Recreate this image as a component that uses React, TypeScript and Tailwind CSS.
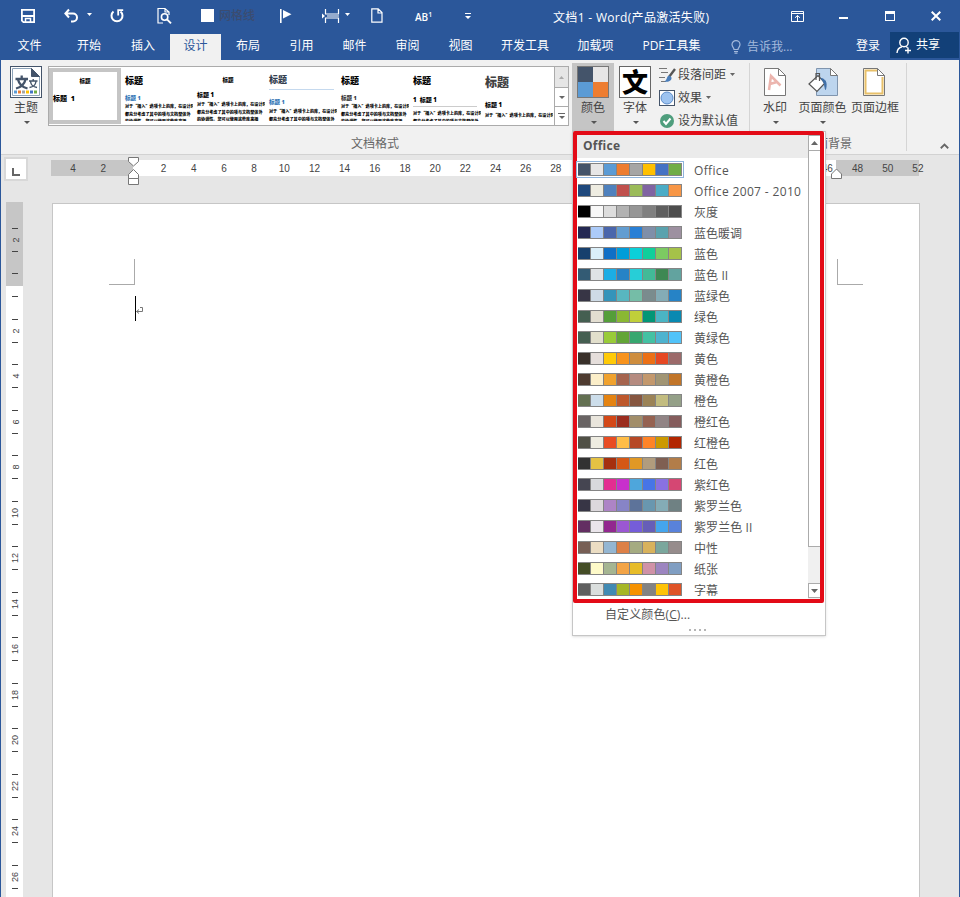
import {ReactNode} from "react";
import clsx from "clsx";

interface ColorScheme {
  name: string;
  colors: string[];
}

const colorSchemes: ColorScheme[] = [
  {name: "Office", colors: ["#44546a", "#e7e6e6", "#5b9bd5", "#ed7d31", "#a5a5a5", "#ffc000", "#4472c4", "#70ad47"]},
  {name: "Office 2007 - 2010", colors: ["#1f497d", "#eeece1", "#4f81bd", "#c0504d", "#9bbb59", "#8064a2", "#4bacc6", "#f79646"]},
  {name: "灰度", colors: ["#000000", "#f8f8f8", "#dddddd", "#b2b2b2", "#969696", "#808080", "#5f5f5f", "#4d4d4d"]},
  {name: "蓝色暖调", colors: ["#242852", "#accbf9", "#4a66ac", "#629dd1", "#297fd5", "#7f8fa9", "#5aa2ae", "#9d90a0"]},
  {name: "蓝色", colors: ["#17406d", "#dbeff9", "#0f6fc6", "#009dd9", "#0bd0d9", "#10cf9b", "#7cca62", "#a5c249"]},
  {name: "蓝色 II", colors: ["#335b74", "#dfe3e5", "#1cade4", "#2683c6", "#27ced7", "#42ba97", "#3e8853", "#62a39f"]},
  {name: "蓝绿色", colors: ["#373545", "#cedbe6", "#3494ba", "#58b6c0", "#75bda7", "#7a8c8e", "#84acb6", "#2683c6"]},
  {name: "绿色", colors: ["#455f51", "#e3ded1", "#549e39", "#8ab833", "#c0cf3a", "#029676", "#4ab5c4", "#0989b1"]},
  {name: "黄绿色", colors: ["#455f51", "#e2dfcc", "#99cb38", "#63a537", "#37a76f", "#44c1a3", "#4eb3cf", "#51c3f9"]},
  {name: "黄色", colors: ["#39302a", "#e5dedb", "#ffca08", "#f8931d", "#ce8d3e", "#ec7016", "#e64823", "#9c6a6a"]},
  {name: "黄橙色", colors: ["#4e3b30", "#fbeec9", "#f0a22e", "#a5644e", "#b58b80", "#c3986d", "#a19574", "#c17529"]},
  {name: "橙色", colors: ["#637052", "#ccddea", "#e48312", "#bd582c", "#865640", "#9b8357", "#c2bc80", "#94a088"]},
  {name: "橙红色", colors: ["#696464", "#e9e5dc", "#d34817", "#9b2d1f", "#a28e6a", "#956251", "#918485", "#855d5d"]},
  {name: "红橙色", colors: ["#505046", "#eeece1", "#e84c22", "#ffbd47", "#b64926", "#ff8427", "#cc9900", "#b22600"]},
  {name: "红色", colors: ["#323232", "#e5c243", "#a5300f", "#d55816", "#e19825", "#b19c7d", "#7f5f52", "#b27d49"]},
  {name: "紫红色", colors: ["#454551", "#d8d9dc", "#e32d91", "#c830cc", "#4ea6dc", "#4775e7", "#8971e1", "#d54773"]},
  {name: "紫罗兰色", colors: ["#373545", "#dcd8dc", "#ad84c6", "#8784c7", "#5d739a", "#6997af", "#84acb6", "#6f8183"]},
  {name: "紫罗兰色 II", colors: ["#632e62", "#eae5eb", "#92278f", "#9b57d3", "#755dd9", "#665eb8", "#45a5ed", "#5982db"]},
  {name: "中性", colors: ["#775f55", "#ebddc3", "#94b6d2", "#dd8047", "#a5ab81", "#d8b25c", "#7ba79d", "#968c8c"]},
  {name: "纸张", colors: ["#444d26", "#fefac9", "#a5b592", "#f3a447", "#e7bc29", "#d092a7", "#9c85c0", "#809ec2"]},
  {name: "字幕", colors: ["#5f5f5f", "#dadedd", "#418ab3", "#a6b727", "#f69200", "#838383", "#fec306", "#df5327"]},
];

const Caret = ({className}: {className?: string}) => (
  <svg viewBox="0 0 5 3" className={clsx("shrink-0", className ?? "w-[6px] h-[3px]")} preserveAspectRatio="none">
    <path d="M0 0h5L2.5 3z" fill="currentColor" />
  </svg>
);

const TitleBar = () => (
  <div className="flex items-center h-[33px] text-white">
    <svg viewBox="0 0 16 16" className="ml-[19px] -mt-0.5 w-4 h-4 shrink-0" fill="none" stroke="currentColor" strokeWidth="1.8">
      <path d="M1.9 1.9h12.2v12.2H3.4L1.9 12.6z" />
      <path d="M2 8h12" strokeWidth="2" />
      <path d="M5.5 14v-3.5h5V14" strokeWidth="1.5" />
    </svg>
    <svg viewBox="0 0 16 16" className="ml-[27px] -mt-0.5 w-4 h-4 shrink-0" fill="none" stroke="currentColor" strokeWidth="2">
      <path d="M6 1.5 2.4 5.5 6 9.5M2.5 5.5H10a3.9 3.9 0 0 1 0 8H8" />
    </svg>
    <Caret className="ml-2 -mt-1 w-[5px] h-[3px]" />
    <svg viewBox="0 0 16 16" className="ml-[17px] -mt-0.5 w-4 h-4 shrink-0" fill="none" stroke="currentColor" strokeWidth="2">
      <path d="M4.500 3.600A5.500 5.500 0 1 0 11.500 3.600" />
      <path d="M9.200 7.500V2.200h5" strokeWidth="1.8" />
    </svg>
    <svg viewBox="0 0 16 18" className="ml-[31px] -mt-0.5 w-4 h-[18px] shrink-0" fill="none" stroke="currentColor" strokeWidth="1.2">
      <path d="M7 16H2V1.5h7L13 5v3M9 1.5V5h4" />
      <circle cx="8.6" cy="10" r="3.2" strokeWidth="1.6" />
      <path d="m11 12.4 4 4" strokeWidth="2" />
    </svg>
    <div className="ml-[29px] -mt-0.5 w-[13px] h-[13px] bg-white shrink-0" />
    <span className="ml-[5px] -mt-0.5 w-9 text-xs font-medium text-[#3b4c70] shrink-0">网格线</span>
    <svg viewBox="0 0 14 16" className="ml-[24px] -mt-0.5 w-[14px] h-4 shrink-0">
      <path d="M1 1h1.6v14H1zM4 2l8.5 4.3L4 10.5z" fill="currentColor" />
    </svg>
    <svg viewBox="0 0 18 16" className="ml-[29px] -mt-0.5 w-[18px] h-4 shrink-0" fill="none" stroke="currentColor" strokeWidth="1.2">
      <path d="M3.5 1v5h13V1M3.5 15v-5h13v5M5 8h12" />
      <path d="M0 5.5 3 8l-3 2.5z" fill="currentColor" stroke="none" />
    </svg>
    <Caret className="ml-[5px] -mt-1 w-[5px] h-[3px]" />
    <svg viewBox="0 0 12 15" className="ml-[21px] -mt-0.5 w-3 h-[15px] shrink-0" fill="none" stroke="currentColor" strokeWidth="1.2">
      <path d="M.8.8h6.4L11 4.6v9.6H.8zM7 1v4h4" />
    </svg>
    <span className="ml-[32px] w-[16px] text-[10px] leading-3 whitespace-nowrap font-semibold shrink-0">
      AB<sup className="text-[7px] top-[-4px]">1</sup>
    </span>
    <svg viewBox="0 0 6 6" className="ml-[34px] -mt-0.5 w-[6px] h-[6px] shrink-0">
      <path d="M0 0h6v1H0zM0 3h6L3 6z" fill="currentColor" />
    </svg>
    <span className="ml-[82px] w-[157px] text-xs tracking-[0.32px] whitespace-nowrap shrink-0 pt-0.5">
      文档1 - Word(产品激活失败)
    </span>
    <svg viewBox="0 0 13 11" className="ml-[81px] -mt-px w-[13px] h-[11px] shrink-0" fill="none" stroke="currentColor">
      <path d="M.5.5h12v10H.5zM.5 2.5h12M6.5 10V4.5M4 6.8l2.5-2.3L9 6.8" />
    </svg>
    <div className="ml-[35px] mt-[3px] w-[9px] h-[2px] bg-white shrink-0" />
    <div className="ml-[37px] -mt-px w-[10px] h-[10px] border border-t-[3px] border-white shrink-0" />
    <svg viewBox="0 0 10 10" className="ml-[36px] -mt-px w-[10px] h-[10px] shrink-0" stroke="currentColor" strokeWidth="2">
      <path d="m.7.7 8.6 8.6M9.3.7.7 9.3" />
    </svg>
  </div>
);

const TabBar = () => (
  <div className="flex h-[27px] leading-[26px] text-xs text-white text-center whitespace-nowrap">
    <div className="w-[61px] pr-1">文件</div>
    <div className="w-[54px]">开始</div>
    <div className="w-[54px]">插入</div>
    <div className="w-[51px] mt-px bg-[#f1f1f1] text-[#2b579a] leading-6">设计</div>
    <div className="w-[54px]">布局</div>
    <div className="w-[53px]">引用</div>
    <div className="w-[53px]">邮件</div>
    <div className="w-[53px]">审阅</div>
    <div className="w-[53px]">视图</div>
    <div className="w-[76px]">开发工具</div>
    <div className="w-[65px]">加载项</div>
    <div className="w-[87px]">PDF工具集</div>
    <div className="flex items-center ml-[16px] w-[125px] text-[#a3b9dc] gap-[6px]">
      <svg viewBox="0 0 10 14" className="w-[10px] h-[14px]" fill="none" stroke="currentColor" strokeWidth="1.2">
        <path d="M3 9.5C3 7.5 1 7 1 4.6a4 4 0 0 1 8 0C9 7 7 7.5 7 9.5zM3 11.5h4M3.5 13.2h3" />
      </svg>
      <span>告诉我...</span>
    </div>
    <div className="w-6">登录</div>
    <div className="flex items-center ml-[10px] w-[69px] h-[26px] -mt-px bg-[#124078] pl-[6px] gap-1">
      <svg viewBox="0 0 16 17" className="w-4 h-[17px]" fill="none" stroke="currentColor" strokeWidth="1.4">
        <circle cx="8" cy="5.5" r="4.2" />
        <path d="M1 16c.3-3.7 2.3-5.5 5-6.2M10 9.7l1.5.8M12 10.5v6M9 13.5h6" />
      </svg>
      <span>共享</span>
    </div>
  </div>
);

const bodyLines = ["对于“插入”选项卡上的库，在设计时", "都充分考虑了其中的项与文档整体外", "的协调性。您可以使用这些库来插"];

interface StyleThumbProps {
  title: string;
  heading: string;
  body: string;
  headingText?: string;
  lines?: number;
  rule?: ReactNode;
}

const StyleThumb = ({title, heading, body, headingText = "标题 1", lines = 3, rule}: StyleThumbProps) => (
  <div className="w-[72px] h-[54px] pl-1 overflow-hidden whitespace-nowrap font-black text-black shrink-0">
    <div className={title}>标题</div>
    {rule}
    <div className={heading}>{headingText}</div>
    <div className={clsx("text-[4.1px] leading-[7.5px] font-['Noto_Sans_CJK_SC',sans-serif]", body)}>
      {bodyLines.slice(0, lines).map((line) => (
        <div key={line}>{line}</div>
      ))}
    </div>
  </div>
);

const Gallery = () => (
  <div className="flex w-[521px] h-[60px] border border-[#ababab] bg-white">
    <div className="w-[72px] h-[56px] mt-px border-[4px] border-[#c5c5c5] font-black text-black shrink-0 whitespace-nowrap">
      <div className="text-center text-[5.5px] leading-[18px]">标题</div>
      <div className="text-[7px] leading-[17px]">标题&nbsp; 1</div>
    </div>
    <StyleThumb title="text-[9px] leading-[27px]" heading="text-[5.5px] leading-[8px] text-[#2e74b5]" body="pt-px" />
    <StyleThumb title="text-[5.5px] leading-[27px] text-center pr-[6px]" heading="text-[6px] leading-[2px] pb-px" body="pt-[4px]" />
    <StyleThumb
      title="text-[9px] leading-[18px] pt-1 text-[#323e4f]"
      rule={<div className="h-px mr-[3px] bg-[#c5d9ee]" />}
      heading="text-[5.5px] leading-[8px] pt-2 text-[#2e74b5]"
      body="pt-0.5"
      lines={2}
    />
    <StyleThumb title="text-[9px] leading-[27px]" heading="text-[5.5px] leading-[8px] text-[#333]" body="pt-px" />
    <StyleThumb
      title="text-[9px] leading-[27px]"
      heading="text-[6px] leading-[12px] border-b border-[#ccc] mr-1 whitespace-pre"
      headingText="1  标题 1"
      body="pt-[3px] leading-[6.5px]"
      lines={2}
    />
    <StyleThumb title="text-[12px] leading-[32px] text-[#404040]" heading="text-[6px] leading-[13px]" body="" lines={1} />
    <div className="w-[14px] ml-auto border-l border-[#ababab] text-[#666] shrink-0">
      <div className="flex items-center justify-center h-5 bg-[#e6e6e6] text-[#aaa]">
        <Caret className="rotate-180 w-[5px] h-[3px]" />
      </div>
      <div className="flex items-center justify-center h-[20px] border-y border-[#ababab]">
        <Caret />
      </div>
      <div className="flex flex-col items-center justify-center gap-0.5 h-[18px]">
        <div className="w-[7px] h-px bg-[#666]" />
        <Caret />
      </div>
    </div>
  </div>
);

const ThemeIcon = () => (
  <svg viewBox="0 0 32 32" className="w-8 h-8">
    <rect x=".5" y=".5" width="31" height="31" fill="#fff" stroke="#44546a" />
    <path d="M2.500 2.500h19l8 8v19h-27z" fill="#fff" stroke="#8ea3b8" />
    <path d="M21.500 2.500v8h8z" fill="#44546a" stroke="#44546a" />
    <g fill="none" stroke="#44546a">
      <path d="M5.500 13h12.500M11.700 9.500v3.500M8 13.500c1 4.500 4 7.500 9.500 9M15.500 13.500c-1 4.500-4 7.500-9.500 9" strokeWidth="2.3" />
      <path d="M19 15h8.500M23.200 13v2M20.500 15.500c.5 3.500 3 5.500 6.500 6M26 15.500c-.5 3.500-3 5.500-6.500 6" strokeWidth="1.4" />
    </g>
    <g>
      <path d="M4 24.500h3v3H4z" fill="#5b9bd5" />
      <path d="M8 24.500h3v3H8z" fill="#ed7d31" />
      <path d="M12 24.500h3v3h-3z" fill="#a5a5a5" />
      <path d="M16 24.500h3v3h-3z" fill="#ffc000" />
      <path d="M20 24.500h3v3h-3z" fill="#4472c4" />
      <path d="M24 24.500h3v3h-3z" fill="#70ad47" />
    </g>
  </svg>
);

interface BigButtonProps {
  icon: ReactNode;
  label: string;
  className: string;
  caret?: boolean;
}

const BigButton = ({icon, label, className, caret = true}: BigButtonProps) => (
  <div className={clsx("flex flex-col items-center h-[69px] pt-[3px] whitespace-nowrap shrink-0", className)}>
    <div className="flex items-center justify-center h-8">{icon}</div>
    <span className="leading-[20px]">{label}</span>
    {caret && <Caret className="mt-[3px] ml-px w-[6px] h-[3px] text-[#555]" />}
  </div>
);

const Ribbon = () => (
  <div className="flex h-[95px] bg-[#f1f1f1] border-b border-[#d2d2d2] pt-[3px] text-xs text-[#444]">
    <BigButton className="w-[44px] ml-[3px]" icon={<ThemeIcon />} label="主题" />
    <div className="pt-[3px]">
      <Gallery />
      <div className="pl-[303px] leading-[36px] text-[#666]">文档格式</div>
    </div>
    <BigButton
      className="w-[42px] ml-[3px] bg-[#c5c5c5]"
      label="颜色"
      icon={
        <div className="grid grid-cols-2 w-8 h-8 border border-[#777]">
          <div className="bg-[#44546a]" />
          <div className="bg-[#e7e6e6]" />
          <div className="bg-[#5b9bd5]" />
          <div className="bg-[#ed7d31]" />
        </div>
      }
    />
    <BigButton
      className="w-[42px]"
      label="字体"
      icon={
        <div className="flex items-center justify-center w-8 h-8 border border-[#666] bg-white text-black font-black text-[26px] leading-[30px]">
          文
        </div>
      }
    />
    <div className="w-[93px] pl-[3px] shrink-0">
      <div className="flex items-center h-[23px]">
        <svg viewBox="0 0 17 16" className="w-[17px] h-4 mr-[2px]" fill="none">
          <path d="M0 1.500h8M2 5.500h7M0 10.500h6M2 14.500h5" stroke="#777" />
          <path d="m16 2-6 8" stroke="#555" strokeWidth="2.400" />
          <path d="M10.500 8.500c-3 0-2 4-5 6 4 1 7.500-1 7-4z" fill="#4a7ebb" />
        </svg>
        段落间距
        <Caret className="ml-1 w-[5px] h-[3px] text-[#666]" />
      </div>
      <div className="flex items-center h-[23px]">
        <svg viewBox="0 0 16 16" className="w-4 h-4 mr-[3px]">
          <rect x=".5" y=".5" width="15" height="15" fill="#fff" stroke="#44546a" />
          <circle cx="8" cy="8" r="6" fill="#9dc3f0" stroke="#5b8bc9" />
        </svg>
        效果
        <Caret className="ml-1 w-[5px] h-[3px] text-[#666]" />
      </div>
      <div className="flex items-center h-[23px]">
        <svg viewBox="0 0 16 16" className="w-4 h-4 mr-[3px]" fill="none">
          <circle cx="8" cy="8" r="7" fill="#4f9e7d" />
          <path d="m4.500 8 2.500 3 4.500-5.500" stroke="#fff" strokeWidth="2" />
        </svg>
        设为默认值
      </div>
    </div>
    <div className="w-px h-[88px] bg-[#d5d5d5]" />
    <div className="w-[156px]">
      <div className="flex">
        <BigButton
          className="w-[48px] ml-px"
          label="水印"
          icon={
            <svg viewBox="0 0 22 28" className="w-[22px] h-7 mr-px" fill="none">
              <path d="M.5.5h14l7 7v20H.5z" fill="#fff" stroke="#777" />
              <path d="M14.500.5v7h7" stroke="#777" />
              <path d="M5 22 7 8l9.500 9.500M6 16l7-2" stroke="#ecb5ae" strokeWidth="2.500" />
            </svg>
          }
        />
        <BigButton
          className="w-[47px]"
          label="页面颜色"
          icon={
            <svg viewBox="0 0 30 28" className="w-[30px] h-7" fill="none">
              <path d="M8.500.5h14l7 7v20h-21z" fill="#bdd5ee" stroke="#8095ae" />
              <path d="M22.500.5v7h7z" fill="#fff" stroke="#777" />
              <path d="m1 16 9-8.500 7 7.500-8 8.500z" fill="#fff" stroke="#555" strokeWidth="1.200" />
              <path d="M8 12V5.500h3.500V13" stroke="#555" strokeWidth="1.200" />
              <path d="M13 10.500c5 .5 6 5 4.500 11-1-3 0-6-4.500-11z" fill="#3f6fa8" stroke="#3f6fa8" />
            </svg>
          }
        />
        <BigButton
          className="w-[58px]"
          label="页面边框"
          caret={false}
          icon={
            <svg viewBox="0 0 22 28" className="w-[22px] h-7 mr-0.5" fill="none">
              <path d="M.5.5h14l7 7v20H.5z" fill="#fff" stroke="#777" />
              <path d="M14 2.500H2.500v23h17V9" stroke="#e8c069" strokeWidth="2" />
              <path d="M14.500.5v7h7z" fill="#fff" stroke="#777" />
            </svg>
          }
        />
      </div>
      <div className="pl-[54px] leading-[24px] text-[#666]">页面背景</div>
    </div>
    <div className="w-px h-[88px] bg-[#d5d5d5]" />
    <svg viewBox="0 0 8 5" className="ml-[33px] mt-[80px] w-[9px] h-[6px]" fill="none" stroke="#666" strokeWidth="1.600">
      <path d="m.7 4.500 3.300-3.300 3.300 3.300" />
    </svg>
  </div>
);

const horizontalMarks = ["4", "2", "", ...Array.from({length: 26}, (_, i) => String((i + 1) * 2))];
const verticalMarks = Array.from({length: 13}, (_, i) => String((i + 1) * 2));

const HorizontalRuler = () => (
  <div className="relative flex w-[868px] h-4 pl-[7px] leading-[18px] bg-[linear-gradient(to_right,#c6c6c6_82px,#fff_82px,#fff_785px,#c6c6c6_785px)]">
    {horizontalMarks.map((mark, i) => (
      <span key={i} className="w-[30.18px] shrink-0 text-center">
        {mark}
      </span>
    ))}
    <svg viewBox="0 0 12 29" className="absolute left-[77px] -top-[3px] w-3 h-[29px]" fill="#fff" stroke="#777">
      <path d="M.5.5h10v4L5.500 9l-5-4.500zM5.500 12.500l5 5v4H.5v-4zM.5 21.500h10v6H.5z" />
    </svg>
    <svg viewBox="0 0 12 12" className="absolute left-[780px] top-[8px] w-3 h-3" fill="#fff" stroke="#777">
      <path d="m5.500 1 5 5v4.500H.5V6z" />
    </svg>
  </div>
);

const RulerCell = ({mark}: {mark: string}) => (
  <div className="flex flex-col items-center h-[45.5px] py-[10.7px] justify-between shrink-0">
    <div className="w-[6px] h-px bg-[#444]" />
    <span className="-rotate-90 leading-[10px] text-[9px] translate-x-px">{mark}</span>
    <div className="w-[6px] h-px bg-[#444]" />
  </div>
);

const VerticalRuler = () => (
  <div className="w-[17px] -mt-px ml-[5px] overflow-hidden bg-white shrink-0">
    <div className="h-[84px] pt-[15px] bg-[#c6c6c6]">
      <RulerCell mark="2" />
      <div className="w-[6px] h-px mx-auto mt-[10px] bg-[#444]" />
    </div>
    <div className="w-[6px] h-px mx-auto mt-[10px] bg-[#444]" />
    <div className="mt-[11px]">
      {verticalMarks.map((mark) => (
        <RulerCell key={mark} mark={mark} />
      ))}
    </div>
  </div>
);

const Workspace = () => (
  <div className="flex-1 min-h-0 flex flex-col bg-[#e6e6e6] font-['Liberation_Sans',Arial,sans-serif] text-[10px] text-[#444]">
    <div className="flex h-12 pt-[5px] shrink-0">
      <div className="flex items-end justify-center w-[24px] h-6 -mt-[3px] ml-[3px] mr-[23px] pb-[3px] bg-white border-2 border-[#d8d8d8]">
        <div className="w-[8px] h-[8px] border-l-2 border-b-2 border-[#666]" />
      </div>
      <HorizontalRuler />
    </div>
    <div className="flex flex-1 min-h-0">
      <VerticalRuler />
      <div className="w-[868px] ml-[29px] bg-white border border-b-0 border-[#c6c6c6]">
        <div className="flex justify-between pt-[55px] px-[56px]">
          <div className="w-[26px] h-[26px] border-r border-b border-[#aaa]" />
          <div className="w-[26px] h-[26px] border-l border-b border-[#aaa]" />
        </div>
        <div className="flex items-center mt-[11px] ml-[82px] h-[25px]">
          <div className="w-px h-full bg-black" />
          <svg viewBox="0 0 7 8" className="w-[7px] h-2 mt-1" fill="none" stroke="#777">
            <path d="M4 .5h2.500v4H.5M3 2.500l-2.500 2 2.500 2" />
          </svg>
        </div>
      </div>
    </div>
  </div>
);

const ColorMenu = () => (
  <div className="absolute left-[571px] top-[131px] w-[254px] h-[505px] bg-white border border-[#c6c6c6] shadow-sm text-xs text-[#555]">
    <div className="flex w-[251px] h-[472px] -mt-px border-4 border-[#e30b17] rounded-[2px]">
      <div className="w-[231px] shrink-0">
        <div className="h-[23px] mb-px pl-[6px] leading-[22px] bg-[#ebebeb] font-bold tracking-[0.25px] text-[#555]">Office</div>
        {colorSchemes.map((scheme, i) => (
          <div key={scheme.name} className="flex items-center h-[21px] pl-px">
            <div
              className={clsx(
                "flex w-[104px] h-[13px] gap-px py-px pr-px bg-[#858585]",
                i === 0 && "outline outline-[#8fb4dc] outline-offset-1"
              )}
            >
              {scheme.colors.map((color) => (
                <div key={color} className="flex-1" style={{backgroundColor: color}} />
              ))}
            </div>
            <span
              className={clsx(
                "ml-3 pt-px whitespace-nowrap leading-[17px]",
                scheme.name.startsWith("Office") && "tracking-[0.35px]",
                scheme.name.endsWith("II") && "tracking-[0.1px]"
              )}
            >
              {scheme.name}
            </span>
          </div>
        ))}
      </div>
      <div className="flex flex-col w-[12px] bg-[#f0f0f0] text-[#666]">
        <div className="flex items-center justify-center h-[16px] bg-white border border-r-0 border-[#ababab]">
          <Caret className="rotate-180 w-[7px] h-1" />
        </div>
        <div className="h-[396px] bg-white border-l border-b border-[#ababab]" />
        <div className="flex items-center justify-center h-[15px] mt-[36px] bg-white border border-r-0 border-[#ababab]">
          <Caret className="w-[7px] h-1" />
        </div>
      </div>
    </div>
    <div className="pl-[32px] leading-[24px] tracking-[0.1px]">
      自定义颜色(<u>C</u>)...
    </div>
    <div className="flex justify-center gap-[3px] mt-[2px] pr-1">
      {[0, 1, 2, 3].map((dot) => (
        <div key={dot} className="w-[2px] h-[2px] bg-[#b5b5b5]" />
      ))}
    </div>
  </div>
);

export default function App() {
  return (
    <div className="relative flex flex-col w-[960px] h-[897px] overflow-hidden bg-[#2b579a] border-x border-[#2b579a] font-['Open_Sans','Noto_Sans_CJK_SC',sans-serif]">
      <TitleBar />
      <TabBar />
      <Ribbon />
      <Workspace />
      <ColorMenu />
    </div>
  );
}
